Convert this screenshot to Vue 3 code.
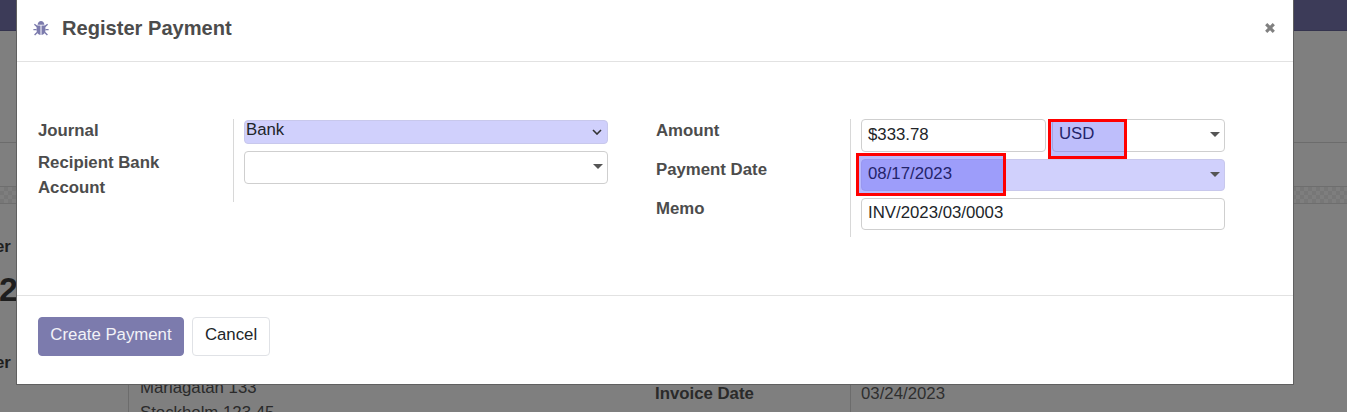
<script setup>
</script>

<template>
  <div class="page">
    <div class="backdrop">
      <div class="nav"></div>
      <div class="control"></div>
      <div class="status"></div>
      <div class="band"></div>
      <div class="sheet">
        <div class="clip first">er</div>
        <div class="clip big">2</div>
        <div class="clip second">er</div>
        <div class="info">
          <div class="addr">
            <div>Mariagatan 133</div>
            <div>Stockholm 123 45</div>
          </div>
          <div class="inv-label">Invoice Date</div>
          <div class="inv-value">03/24/2023</div>
        </div>
      </div>
    </div>

    <div class="modal">
      <header class="head">
        <svg class="bug" viewBox="0 0 16 16" width="16" height="16" aria-hidden="true">
          <path d="M4.6 4.8C4.8 2.6 6.2 1 8 1s3.2 1.6 3.4 3.8z" />
          <path d="M3.6 5.6h3.9V15C5.2 14.8 3.6 13 3.6 10.8zM8.5 5.6h3.9v5.2c0 2.2-1.6 4-3.9 4.2z" />
          <path class="legs" d="M4.2 6.6 1.4 4.2M11.8 6.6l2.8-2.4M3.6 9.6H.4M12.4 9.6h3.2M4.4 12.2 1.6 15M11.6 12.2l2.8 2.8" />
        </svg>
        <h4 class="title">Register Payment</h4>
        <svg class="close" viewBox="0 0 10 10" width="10" height="10" aria-hidden="true">
          <path d="M1.2 1.2 8.8 8.8M8.8 1.2 1.2 8.8" />
        </svg>
      </header>

      <div class="body">
        <div class="group left">
          <div class="labels">
            <label class="lab journal-l">Journal</label>
            <label class="lab">Recipient Bank<br />Account</label>
          </div>
          <div class="fields">
            <div class="field journal">
              <span class="val">Bank</span>
              <svg class="chev" viewBox="0 0 10 6" width="10" height="6" aria-hidden="true"><path d="M1 1l4 4 4-4" /></svg>
            </div>
            <div class="field recipient"><i class="caret"></i></div>
          </div>
        </div>

        <div class="group right">
          <div class="labels">
            <label class="lab r">Amount</label>
            <label class="lab r">Payment Date</label>
            <label class="lab r">Memo</label>
          </div>
          <div class="fields">
            <div class="amount-row">
              <div class="field amount"><span class="val">$333.78</span></div>
              <div class="field currency">
                <span class="val marked">USD</span><i class="caret"></i>
                <div class="mark mark-usd"></div>
              </div>
            </div>
            <div class="field date">
              <span class="val marked">08/17/2023</span><i class="caret"></i>
              <div class="mark mark-date"></div>
            </div>
            <div class="field memo"><span class="val">INV/2023/03/0003</span></div>
          </div>
        </div>
      </div>

      <footer class="foot">
        <button class="btn primary">Create Payment</button>
        <button class="btn secondary">Cancel</button>
      </footer>
    </div>
  </div>
</template>

<style>
html, body { margin: 0; padding: 0; }
</style>

<style scoped>
.page {
  position: relative;
  width: 1347px;
  height: 412px;
  overflow: hidden;
  background: #7f7f7f;
  font-family: "Liberation Sans", Arial, sans-serif;
  font-size: 16.8px;
  color: #212529;
}
.nav { height: 30px; background: #3c3b58; border-bottom: 1px solid #34334e; }
.control { height: 111px; border-bottom: 1px solid #6c6c6c; }
.status { height: 43px; border-bottom: 1px solid #6e6e6e; }
.band {
  height: 16px;
  border-bottom: 1px solid #6e6e6e;
  background-color: #7b7b7b;
  background-image: repeating-conic-gradient(#777 0 25%, #7e7e7e 0 50%);
  background-size: 8px 8px;
}
.sheet { position: relative; height: 208px; }
.clip { position: absolute; left: 0; color: #1e1e1e; font-weight: 700; }
.first { top: 34px; line-height: 18px; margin-left: -5px; }
.big { top: 65px; font-size: 34px; line-height: 40px; margin-left: -1px; }
.second { top: 150px; line-height: 18px; margin-left: -5px; }
.info { position: absolute; left: 128px; right: 0; top: 176px; height: 40px; display: grid; grid-template-columns: 527px 195px 1fr; }
.addr { border-left: 1px solid #6c6c6c; padding-left: 11px; line-height: 25px; color: #2a2a2a; margin-top: -5px; }
.inv-label { font-weight: 700; color: #2a2a2a; line-height: 24px; margin-top: 2px; }
.inv-value { border-left: 1px solid #6c6c6c; padding-left: 10px; color: #2f2f2f; line-height: 24px; padding-top: 2px; }

.modal {
  position: absolute;
  left: 16px;
  top: 0;
  width: 1276px;
  height: 384px;
  background: #fff;
  border: solid #606060;
  border-width: 0 1px 1px 1px;
  display: flex;
  flex-direction: column;
}
.head {
  flex: none;
  border-bottom: 1px solid #e2e2e2;
  display: flex;
  align-items: center;
  padding: 0 18px 5px 16px;
  height: 56px;
}
.bug { fill: #7c7bad; flex: none; }
.legs { fill: none; stroke: #7c7bad; stroke-width: 1.4; }
.title { margin: 0 0 0 13px; font-size: 20.1px; font-weight: 700; color: #4c4c4c; flex: 1; }
.close { fill: none; stroke: #808080; stroke-width: 3.1; flex: none; }

.body { height: 233px; flex: none; box-sizing: border-box; padding: 57px 0 0 21px; display: flex; gap: 48px; }
.group { display: grid; grid-template-columns: 195px 1fr; align-self: flex-start; }
.left { width: 570px; }
.right { width: 569px; grid-template-columns: 194px 1fr; }
.labels { display: flex; flex-direction: column; }
.lab { font-weight: 700; color: #4c4c4c; line-height: 25px; }
.journal-l { height: 31px; line-height: 23px; }
.lab.r { height: 39px; line-height: 24px; }
.fields { border-left: 1px solid #d8d8d8; padding-left: 10px; display: flex; flex-direction: column; }
.left .fields { height: 83px; }
.right .fields { height: 118px; }

.field {
  box-sizing: border-box;
  position: relative;
  border: 1px solid #cfcfcf;
  border-radius: 4px;
  padding: 0 4px 0 6px;
  display: flex;
  align-items: center;
  justify-content: space-between;
  background: #fff;
  line-height: 1;
}
.val { position: relative; z-index: 1; margin-bottom: 3px; }
.amount .val { margin-bottom: 0; }
.date .val, .memo .val { margin-bottom: 1px; }
.marked { color: #24246a; }
.journal { height: 24px; margin-top: 1px; background: #d0d0fc; padding: 0 5px 0 1px; border-color: #c8c8ec; }
.recipient { height: 33px; margin-top: 7px; justify-content: flex-end; }
.chev { fill: none; stroke: #333; stroke-width: 1.6; margin-bottom: 1px; }
.caret { width: 0; height: 0; border: solid transparent; border-width: 5px 5.5px 0; border-top-color: #555; margin-bottom: 2px; }
.amount-row { display: flex; gap: 6px; }
.amount { width: 185px; height: 33px; flex: none; }
.currency { flex: 1; height: 33px; }
.date { height: 32px; margin-top: 7px; background: #d0d0fc; border-color: #c8c8ec; }
.memo { height: 32px; margin-top: 7px; }

.mark { position: absolute; box-sizing: border-box; border: 3px solid #ff0000; }
.mark-usd { left: -5px; top: -1px; width: 79px; height: 40px; background: rgba(107, 107, 247, .44); }
.mark-date { left: -6px; top: -7px; width: 150px; height: 43px; background: rgba(80, 80, 247, .4); }

.foot { flex: 1; border-top: 1px solid #e2e2e2; display: flex; align-items: flex-start; gap: 8px; padding: 21px 0 0 21px; }
.btn { font: inherit; height: 39px; border-radius: 4px; box-sizing: border-box; padding: 0 0 4px; }
.primary { width: 146px; background: #7c7bad; border: 1px solid #7c7bad; color: #f2f2f8; }
.secondary { width: 78px; background: #fff; border: 1px solid #e0e2e6; color: #212529; }
</style>
